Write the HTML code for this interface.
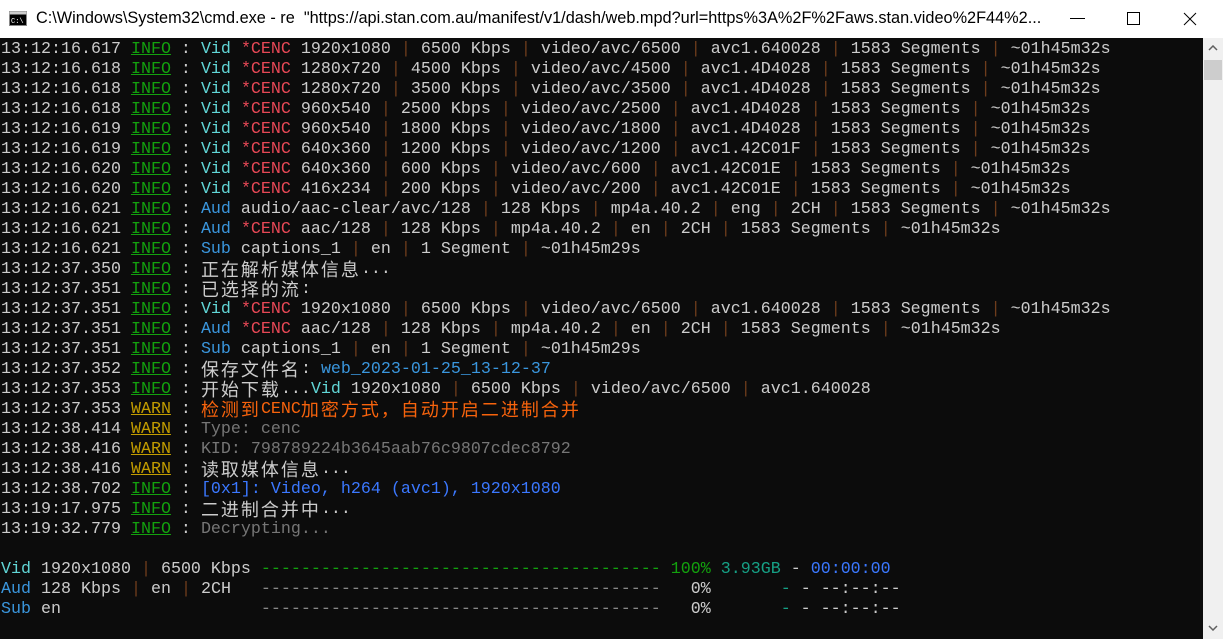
<!DOCTYPE html>
<html><head><meta charset="utf-8"><style>
*{margin:0;padding:0;box-sizing:border-box}
body{width:1223px;height:639px;overflow:hidden;background:#0c0c0c;position:relative}
#title{position:absolute;left:0;top:0;width:1223px;height:38px;background:#fff;font-family:"Liberation Sans","Noto Sans CJK SC",sans-serif;font-size:16.3px;color:#000}
#title .t{position:absolute;left:36px;top:9px;white-space:pre}
#term{position:absolute;left:1px;top:38px;width:1202px;height:601px;background:#0c0c0c;padding-top:2px}
pre{font-family:"Liberation Mono",monospace;font-size:16.67px;line-height:20px;color:#cccccc;white-space:pre}
.c{font-family:"Noto Sans CJK SC",sans-serif;font-size:18px;letter-spacing:2px;display:inline-block;height:20px;line-height:18px;vertical-align:top;overflow:hidden}
.I{color:#13a10e;text-decoration:underline}
.W{color:#c19c00;text-decoration:underline}
.v{color:#61d6d6}.a{color:#3a96dd}.r{color:#e74856}.p{color:#6e3c1c}
.o{color:#f7630c}.g{color:#767676}.b{color:#3b78ff}.cy{color:#3a96dd}
.gr{color:#13a10e}.tl{color:#16a085}.dg{color:#888}
#sb{position:absolute;left:1203px;top:38px;width:20px;height:601px;background:#f0f0f0}
</style></head><body>
<div id="title">
<svg style="position:absolute;left:9px;top:11px" width="18" height="15"><rect x="0.5" y="0.5" width="17" height="14" fill="#000" stroke="#888"/><rect x="0.5" y="0.5" width="17" height="3" fill="#ccc"/><text x="2" y="12" font-size="7" fill="#fff" font-family="Liberation Mono">C:\</text></svg>
<span class="t">C:\Windows\System32\cmd.exe - re  "https://api.stan.com.au/manifest/v1/dash/web.mpd?url=https%3A%2F%2Faws.stan.video%2F44%2...</span>
<div style="position:absolute;left:1070px;top:18px;width:15px;height:1px;background:#000"></div>
<div style="position:absolute;left:1127px;top:12px;width:13px;height:13px;border:1px solid #000"></div>
<svg style="position:absolute;left:1183px;top:12px" width="14" height="14"><path d="M1 1L13 13M13 1L1 13" stroke="#000" stroke-width="1"/></svg>
</div>
<div id="term"><pre>13:12:16.617 <span class="I">INFO</span> : <span class="v">Vid</span> <span class="r">*CENC</span> 1920x1080 <span class="p">|</span> 6500 Kbps <span class="p">|</span> video/avc/6500 <span class="p">|</span> avc1.640028 <span class="p">|</span> 1583 Segments <span class="p">|</span> ~01h45m32s
13:12:16.618 <span class="I">INFO</span> : <span class="v">Vid</span> <span class="r">*CENC</span> 1280x720 <span class="p">|</span> 4500 Kbps <span class="p">|</span> video/avc/4500 <span class="p">|</span> avc1.4D4028 <span class="p">|</span> 1583 Segments <span class="p">|</span> ~01h45m32s
13:12:16.618 <span class="I">INFO</span> : <span class="v">Vid</span> <span class="r">*CENC</span> 1280x720 <span class="p">|</span> 3500 Kbps <span class="p">|</span> video/avc/3500 <span class="p">|</span> avc1.4D4028 <span class="p">|</span> 1583 Segments <span class="p">|</span> ~01h45m32s
13:12:16.618 <span class="I">INFO</span> : <span class="v">Vid</span> <span class="r">*CENC</span> 960x540 <span class="p">|</span> 2500 Kbps <span class="p">|</span> video/avc/2500 <span class="p">|</span> avc1.4D4028 <span class="p">|</span> 1583 Segments <span class="p">|</span> ~01h45m32s
13:12:16.619 <span class="I">INFO</span> : <span class="v">Vid</span> <span class="r">*CENC</span> 960x540 <span class="p">|</span> 1800 Kbps <span class="p">|</span> video/avc/1800 <span class="p">|</span> avc1.4D4028 <span class="p">|</span> 1583 Segments <span class="p">|</span> ~01h45m32s
13:12:16.619 <span class="I">INFO</span> : <span class="v">Vid</span> <span class="r">*CENC</span> 640x360 <span class="p">|</span> 1200 Kbps <span class="p">|</span> video/avc/1200 <span class="p">|</span> avc1.42C01F <span class="p">|</span> 1583 Segments <span class="p">|</span> ~01h45m32s
13:12:16.620 <span class="I">INFO</span> : <span class="v">Vid</span> <span class="r">*CENC</span> 640x360 <span class="p">|</span> 600 Kbps <span class="p">|</span> video/avc/600 <span class="p">|</span> avc1.42C01E <span class="p">|</span> 1583 Segments <span class="p">|</span> ~01h45m32s
13:12:16.620 <span class="I">INFO</span> : <span class="v">Vid</span> <span class="r">*CENC</span> 416x234 <span class="p">|</span> 200 Kbps <span class="p">|</span> video/avc/200 <span class="p">|</span> avc1.42C01E <span class="p">|</span> 1583 Segments <span class="p">|</span> ~01h45m32s
13:12:16.621 <span class="I">INFO</span> : <span class="a">Aud</span> audio/aac-clear/avc/128 <span class="p">|</span> 128 Kbps <span class="p">|</span> mp4a.40.2 <span class="p">|</span> eng <span class="p">|</span> 2CH <span class="p">|</span> 1583 Segments <span class="p">|</span> ~01h45m32s
13:12:16.621 <span class="I">INFO</span> : <span class="a">Aud</span> <span class="r">*CENC</span> aac/128 <span class="p">|</span> 128 Kbps <span class="p">|</span> mp4a.40.2 <span class="p">|</span> en <span class="p">|</span> 2CH <span class="p">|</span> 1583 Segments <span class="p">|</span> ~01h45m32s
13:12:16.621 <span class="I">INFO</span> : <span class="a">Sub</span> captions_1 <span class="p">|</span> en <span class="p">|</span> 1 Segment <span class="p">|</span> ~01h45m29s
13:12:37.350 <span class="I">INFO</span> : <span class="c">正在解析媒体信息</span>...
13:12:37.351 <span class="I">INFO</span> : <span class="c">已选择的流</span>:
13:12:37.351 <span class="I">INFO</span> : <span class="v">Vid</span> <span class="r">*CENC</span> 1920x1080 <span class="p">|</span> 6500 Kbps <span class="p">|</span> video/avc/6500 <span class="p">|</span> avc1.640028 <span class="p">|</span> 1583 Segments <span class="p">|</span> ~01h45m32s
13:12:37.351 <span class="I">INFO</span> : <span class="a">Aud</span> <span class="r">*CENC</span> aac/128 <span class="p">|</span> 128 Kbps <span class="p">|</span> mp4a.40.2 <span class="p">|</span> en <span class="p">|</span> 2CH <span class="p">|</span> 1583 Segments <span class="p">|</span> ~01h45m32s
13:12:37.351 <span class="I">INFO</span> : <span class="a">Sub</span> captions_1 <span class="p">|</span> en <span class="p">|</span> 1 Segment <span class="p">|</span> ~01h45m29s
13:12:37.352 <span class="I">INFO</span> : <span class="c">保存文件名</span>: <span class="cy">web_2023-01-25_13-12-37</span>
13:12:37.353 <span class="I">INFO</span> : <span class="c">开始下载</span>...<span class="v">Vid</span> 1920x1080 <span class="p">|</span> 6500 Kbps <span class="p">|</span> video/avc/6500 <span class="p">|</span> avc1.640028
13:12:37.353 <span class="W">WARN</span> : <span class="o"><span class="c">检测到</span>CENC<span class="c">加密方式，自动开启二进制合并</span></span>
13:12:38.414 <span class="W">WARN</span> : <span class="g">Type: cenc</span>
13:12:38.416 <span class="W">WARN</span> : <span class="g">KID: 798789224b3645aab76c9807cdec8792</span>
13:12:38.416 <span class="W">WARN</span> : <span class="c">读取媒体信息</span>...
13:12:38.702 <span class="I">INFO</span> : <span class="b">[0x1]: Video, h264 (avc1), 1920x1080</span>
13:19:17.975 <span class="I">INFO</span> : <span class="c">二进制合并中</span>...
13:19:32.779 <span class="I">INFO</span> : <span class="g">Decrypting...</span>

<span class="v">Vid</span> 1920x1080 <span class="p">|</span> 6500 Kbps <span class="gr">----------------------------------------</span> <span class="gr">100%</span> <span class="tl">3.93GB</span> - <span class="b">00:00:00</span>
<span class="a">Aud</span> 128 Kbps <span class="p">|</span> en <span class="p">|</span> 2CH   <span class="dg">----------------------------------------</span>   0%       <span class="tl">-</span> - --:--:--
<span class="a">Sub</span> en                    <span class="dg">----------------------------------------</span>   0%       <span class="tl">-</span> - --:--:--</pre></div>
<div id="sb">
<svg style="position:absolute;left:5px;top:7px" width="10" height="6"><path d="M1 5L5 1L9 5" stroke="#606060" fill="none" stroke-width="1.5"/></svg>
<div style="position:absolute;left:1px;top:22px;width:18px;height:20px;background:#cdcdcd"></div>
<svg style="position:absolute;left:5px;top:587px" width="10" height="6"><path d="M1 1L5 5L9 1" stroke="#606060" fill="none" stroke-width="1.5"/></svg>
</div>
</body></html>
